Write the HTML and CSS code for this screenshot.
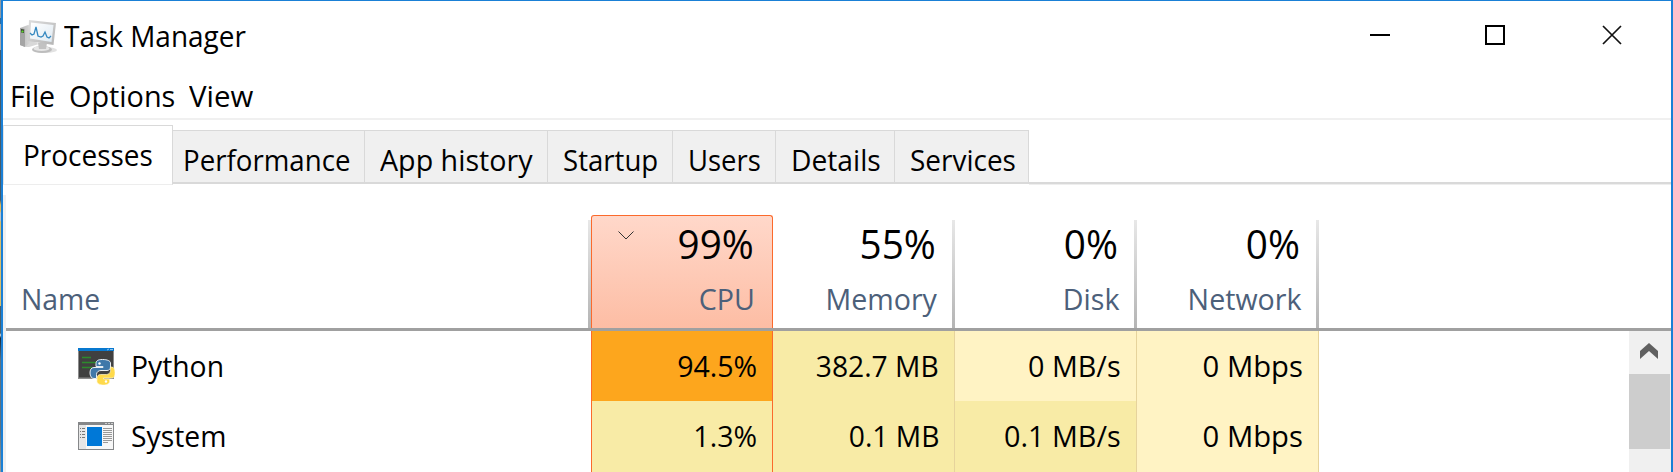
FILE: index.html
```html
<!DOCTYPE html>
<html lang="en">
<head>
<meta charset="utf-8">
<title>Task Manager</title>
<link rel="stylesheet" href="styles.css">
</head>
<body>
<div class="desktop">
<main class="window">
  <header class="titlebar">
    <svg class="app-icon" viewBox="0 0 40 38">
      <defs>
        <linearGradient id="bezel" x1="0" y1="0" x2="1" y2="1"><stop offset="0" stop-color="#dedede"/><stop offset="1" stop-color="#b4b4b4"/></linearGradient>
        <linearGradient id="screen" x1="0" y1="0" x2="1" y2="1"><stop offset="0" stop-color="#ffffff"/><stop offset="1" stop-color="#dfeaf2"/></linearGradient>
        <linearGradient id="tower" x1="0" y1="0" x2="1" y2="0"><stop offset="0" stop-color="#b8b8b8"/><stop offset="1" stop-color="#ececec"/></linearGradient>
      </defs>
      <path d="M1 9 9 6 18 9V25L6 28 1 26Z" fill="url(#tower)"/>
      <path d="M1 9 6 10V28L1 26Z" fill="#a4a4a4"/>
      <path d="M2 10 5 10.500V14L2 13.500Z" fill="#3c4a34"/>
      <circle cx="3.500" cy="12.500" r="1.100" fill="#5fdc2e"/>
      <path d="M6 28 13 22 20 25 10 28Z" fill="#d8d8d8"/>
      <ellipse cx="27" cy="31" rx="11" ry="3" fill="#e2e2e2"/>
      <ellipse cx="23" cy="30.500" rx="10" ry="3.600" fill="#bdbdbd"/>
      <ellipse cx="22.500" cy="29.500" rx="8" ry="2.600" fill="#e6e6e6"/>
      <path d="M19 24H28L27 30H20Z" fill="#c2c2c2"/>
      <path d="M10 1 37 4 34.500 26 9 22Z" fill="url(#bezel)"/>
      <path d="M12 3.500 34.500 6 32.500 23 11 19.500Z" fill="url(#screen)"/>
      <path d="M11 14 13 16 15 15 17 8 19 17 22 18 24 17 26 13 28 18 30 19 32 17" fill="none" stroke="#3488c0" stroke-width="1.300"/>
    </svg>
    <h1 class="title"><span class="t">Task Manager</span></h1>
    <svg class="controls" viewBox="0 0 260 20">
      <path d="M0 10H20" stroke="#000" stroke-width="2"/>
      <rect x="116" y="1" width="18" height="18" fill="none" stroke="#000" stroke-width="2"/>
      <path d="M233 1 251 19M251 1 233 19" stroke="#111" stroke-width="1.700"/>
    </svg>
  </header>
  <nav class="menu">
    <span class="t file">File</span><span class="t options">Options</span><span class="t view">View</span>
  </nav>
  <div class="tabs">
    <div class="tab active"><span class="t">Processes</span></div>
    <div class="tab performance"><span class="t">Performance</span></div>
    <div class="tab history"><span class="t">App history</span></div>
    <div class="tab startup"><span class="t">Startup</span></div>
    <div class="tab users"><span class="t">Users</span></div>
    <div class="tab details"><span class="t">Details</span></div>
    <div class="tab services"><span class="t">Services</span></div>
    <div class="tab-rest"></div>
  </div>
  <section class="grid">
    <div class="head">
      <div class="col-name"><span class="t">Name</span></div>
      <div class="col sorted">
        <svg class="chevron" viewBox="0 0 16 9"><path d="M.5.500 8 8 15.500.500" fill="none" stroke="#333" stroke-width="1"/></svg>
        <span class="total t">99%</span><span class="label t">CPU</span>
      </div>
      <div class="col"><span class="total t">55%</span><span class="label t">Memory</span></div>
      <div class="col"><span class="total t">0%</span><span class="label t">Disk</span></div>
      <div class="col"><span class="total t">0%</span><span class="label t">Network</span></div>
    </div>
    <div class="body">
      <div class="rows">
        <div class="row">
          <div class="process">
            <svg class="icon" viewBox="0 0 37 37">
              <rect x="0" y="0" width="36" height="31" fill="#8c8c8c"/>
              <rect x="1" y="3" width="34" height="26.500" fill="#404040"/>
              <rect width="36" height="3" fill="#0878cf"/>
              <path d="M29 2 31 1M32 1.500H35" stroke="#8ac4f0"/>
              <path d="M4 9.500H13M4 14.500H18M4 19.500H14" stroke="#2c8a2c" stroke-width="1.300"/>
              <path d="M24.500 11.500c-5 0-6.500 1.500-6.500 4v3h7v1h-9c-3 0-4 2.500-4 5.500s1.500 5.500 4 5.500h2.500v-4c0-2.500 2-4 4.500-4h6c2 0 3.500-1.500 3.500-3.500v-4c0-2-3-3.500-8-3.500Z" fill="#3f78a9" stroke="#e8eef2" stroke-width="1"/>
              <path d="M32.500 19v3.500c0 2.500-2 4-4 4h-6c-2 0-3.500 1.500-3.500 3.500v3.500c0 2 3 3.500 6.500 3.500s6-1.500 6-3.500V31h-6v-1h8c3 0 3.500-2.500 3.500-5.500s-1-5.500-3.500-5.500Z" fill="#ffda4b" stroke="#fff6cc" stroke-width=".7"/>
              <circle cx="21.500" cy="15.500" r="1.200" fill="#fff"/><circle cx="28" cy="33.500" r="1.200" fill="#fff"/>
            </svg>
            <span class="t">Python</span>
          </div>
          <div class="cell cpu hot"><span class="t">94.5%</span></div>
          <div class="cell mid"><span class="t mb">382.7 MB</span></div>
          <div class="cell low"><span class="t mbs">0 MB/s</span></div>
          <div class="cell low"><span class="t mbps">0 Mbps</span></div>
        </div>
        <div class="row">
          <div class="process">
            <svg class="icon system-icon" viewBox="0 0 36 28">
              <rect x=".5" y=".5" width="35" height="27" fill="#f7f7f7" stroke="#858789"/>
              <rect width="36" height="3" fill="#858789"/>
              <path d="M27 1.500H29M30 1.500H32M33 1.500H35" stroke="#d0d0d0"/>
              <rect x="1" y="3" width="7" height="24" fill="#e6e6e6"/>
              <path d="M2 6.500H3M2 9.500H3M2 12.500H3M2 15.500H3M4 6.500H7M4 9.500H7M4 12.500H7M4 15.500H7" stroke="#777"/>
              <rect x="9" y="5" width="15" height="19" fill="#0078d7"/>
              <path d="M25 6.500H34M25 8.500H34M25 10.500H34M25 12.500H34M25 14.500H34M25 16.500H34M25 18.500H34M25 20.500H30" stroke="#999"/>
            </svg>
            <span class="t">System</span>
          </div>
          <div class="cell cpu mid"><span class="t">1.3%</span></div>
          <div class="cell mid"><span class="t mb">0.1 MB</span></div>
          <div class="cell mid"><span class="t mbs">0.1 MB/s</span></div>
          <div class="cell low"><span class="t mbps">0 Mbps</span></div>
        </div>
        <div class="row">
          <div class="process"></div><div class="cell cpu mid"></div><div class="cell mid"></div><div class="cell mid"></div><div class="cell low"></div>
        </div>
      </div>
      <div class="scrollbar">
        <svg class="arrow" viewBox="0 0 18 16"><path d="M0 8 9 0 18 8V16L9 8 0 16Z" fill="#606060"/></svg>
        <div class="thumb"></div>
      </div>
    </div>
  </section>
</main>
</div>
</body>
</html>
```

FILE: styles.css
```css
* { box-sizing: border-box; }
body { margin: 0; font: 30px/40px "Open Sans", sans-serif; color: #000; }
.desktop { width: 1673px; height: 472px; padding-left: 1px; overflow: hidden;
  background: linear-gradient(#8f9aa3 0 18px, #2a6ea5 18px 24px, #a7a7a7 24px 50px, #455c6c 50px 200px, #e0b95a 205px 211px, #b8c2ca 213px 220px, #d9bd69 222px 306px, #47606f 306px 333px, #d5dde3 335px, #17293a 338px, #5c7282 360px 430px, #8e9aa0); }
.window { width: 1672px; height: 472px; border: solid #1a80d6; border-width: 1px 2px 0; background: #fff; display: flex; flex-direction: column; }
/* Narrow the face slightly, keeping its height */
.t { white-space: nowrap; display: inline-block; transform: scaleX(.932); transform-origin: 0 50%; }
.titlebar { height: 73px; flex: none; display: flex; padding: 18px 0 0 16px; }
.app-icon { width: 40px; height: 38px; flex: none; }
.title { margin: -3px 0 0 5px; font: inherit; }
.controls { width: 260px; height: 20px; margin: 6px 41px 0 auto; }
.menu { height: 44px; flex: none; padding: 2px 0 0 7px; display: flex; }
.file { width: 59px; transform: scaleX(.95); }
.options { width: 120px; transform: scaleX(.96); }
.view { transform: scaleX(.98); }
.tabs { height: 67px; flex: none; border-top: 2px solid #f0f0f0; display: flex; align-items: flex-end; }
.tab { height: 54px; padding: 9px 0 0 13px; background: #f0f0f0; border: solid #d9d9d9; border-width: 1px 1px 2px 0; margin-bottom: 1px; line-height: 40px; }
.tab .t { margin-top: -1px; }
.tab.active { width: 170px; height: 60px; padding: 9px 0 0 19px; background: #fff; border-bottom: 1px solid #ededed; border-left: 1px solid #e4e4e4; margin-bottom: 0; }
.performance { width: 192px; padding-left: 10px; }
.performance .t { transform: scaleX(.922); }
.history { width: 183px; padding-left: 15px; }
.history .t { transform: scaleX(.955); }
.startup { width: 125px; padding-left: 15px; }
.startup .t { transform: scaleX(.92); }
.users { width: 103px; padding-left: 15px; }
.users .t { transform: scaleX(.915); }
.details { width: 119px; padding-left: 15px; }
.details .t { transform: scaleX(.94); }
.services { width: 134px; padding-left: 15px; }
.tab-rest { flex: 1; height: 3px; border-top: 2px solid #d9d9d9; background: #eee; }
.grid { flex: 1; min-height: 0; margin-top: 10px; border-left: 3px solid #f0f0f0; display: flex; flex-direction: column; }
.head { height: 136px; flex: none; display: flex; align-items: flex-end; border-bottom: 3px solid #a0a0a0; }
.col-name { width: 585px; height: 108px; padding: 59px 0 0 15px; color: #4c607a; border-right: 3px solid; border-image: linear-gradient(#e8e8e8, #b4b4b4) 1; }
.col-name .t { transform: scaleX(.945); }
.col { width: 182px; height: 108px; display: flex; flex-direction: column; align-items: flex-end; padding-right: 15px; border-right: 3px solid; border-image: linear-gradient(#e8e8e8, #b4b4b4) 1; }
.col .t, .cell .t { transform-origin: 100% 50%; }
.sorted { height: 113px; padding: 4px 17px 0 0; background: linear-gradient(#ffd8ca, #fdbda4); border: 1px solid #fb6a2c; border-bottom: 0; border-image: none; border-radius: 3px 3px 0 0; position: relative; }
.chevron { position: absolute; left: 26px; top: 15px; width: 16px; height: 9px; }
.col .total { font-size: 40px; line-height: 54px; margin: -3px 1px 0 0; transform: scaleX(.967); }
.label { color: #4c607a; line-height: 40px; margin-top: 8px; }
.col .label { transform: scaleX(.953); }
.body { flex: 1; min-height: 0; display: flex; justify-content: space-between; }
.row { height: 70px; display: flex; }
.process { width: 585px; padding: 0 0 0 72px; display: flex; }
.icon { width: 37px; height: 37px; margin: 17px 16px 0 0; flex: none; }
.system-icon { width: 36px; height: 28px; margin: 21px 17px 0 0; }
.process .t { margin-top: 15px; transform: scaleX(.943); }
.cell { width: 182px; padding: 15px 15px 0 0; text-align: right; border-right: 1px solid #e6d39c; }
.cpu { border: solid #fb6a2c; border-width: 0 1px; }
.cpu .t { transform: scaleX(.95); }
.mb { transform: scaleX(.94); }
.mbs { transform: scaleX(.958); }
.mbps { transform: scaleX(.975); }
.hot { background: #fda61d; }
.mid { background: #f8eba6; }
.low { background: #fff3c4; }
.scrollbar { width: 42px; background: #f0f0f0; display: flex; flex-direction: column; }
.arrow { width: 18px; height: 16px; margin: 12px 0 15px 11px; flex: none; }
.thumb { width: 41px; height: 75px; background: #cdcdcd; flex: none; }
```
